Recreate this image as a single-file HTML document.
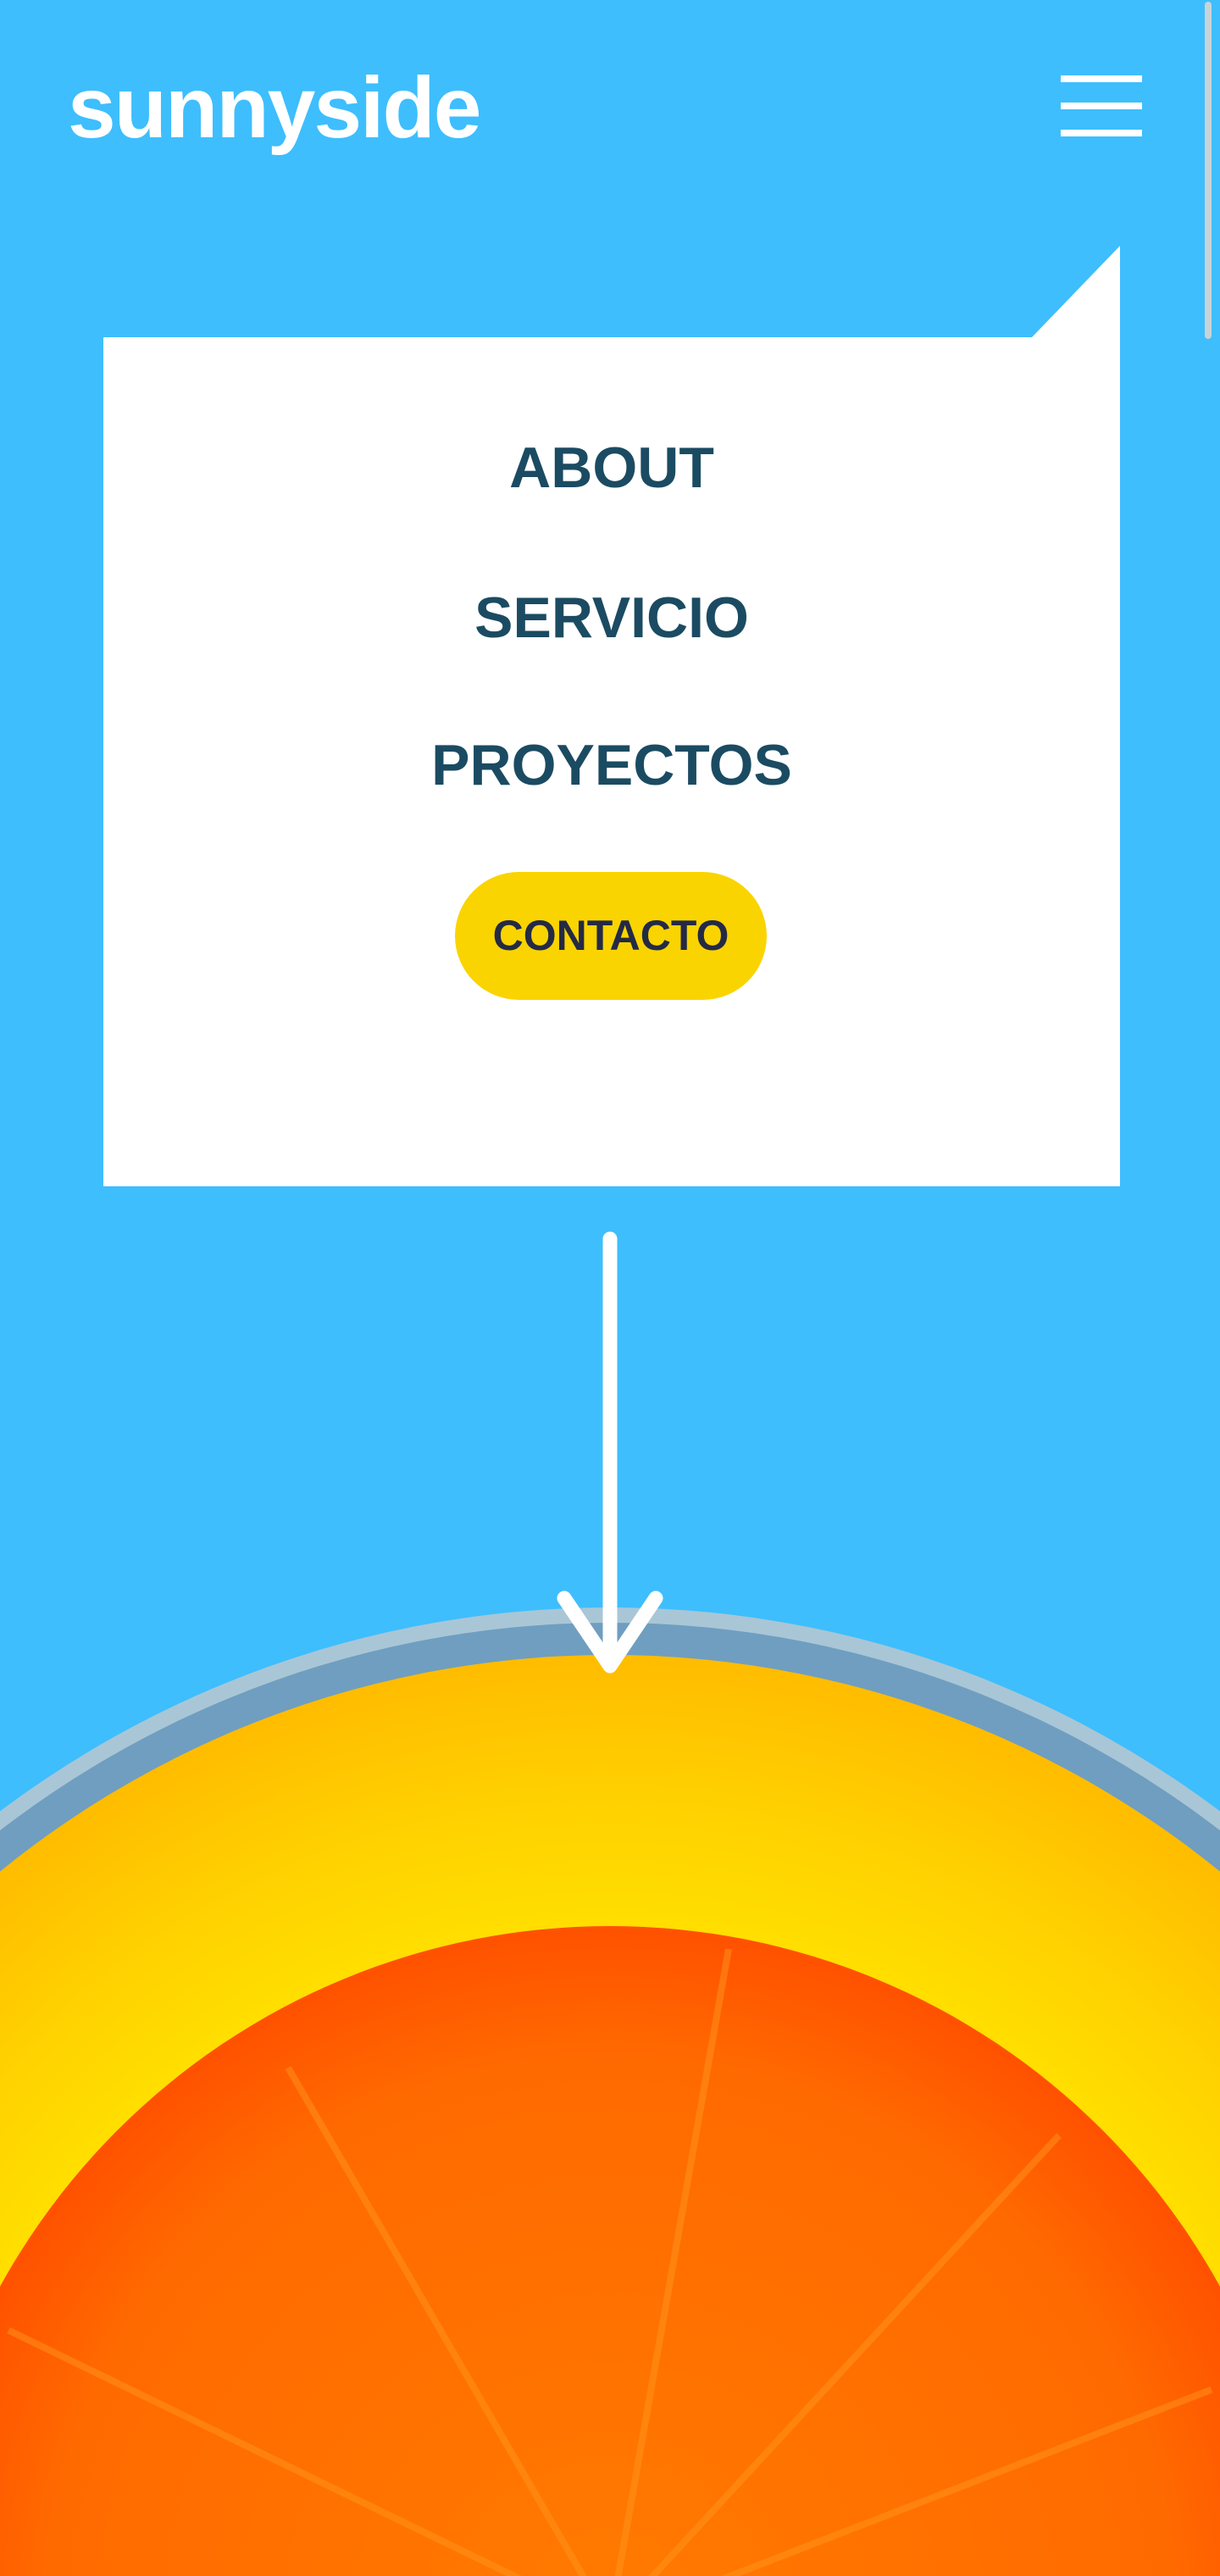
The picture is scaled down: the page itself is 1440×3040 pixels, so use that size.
<!DOCTYPE html>
<html><head><meta charset="utf-8"><style>
html,body{margin:0;padding:0;width:1440px;height:3040px;overflow:hidden}
body{background:#3ebefd;position:relative;font-family:"Liberation Sans",sans-serif}
.logo{position:absolute;left:80px;top:62px;font-size:102px;font-weight:bold;color:#fff;letter-spacing:-2px;line-height:130px}
.ham{position:absolute;left:1252px;width:96px;height:8px;background:#fff}
.scroll{position:absolute;left:1422px;top:2px;width:8px;height:398px;background:#c8d3d8;border-radius:4px}
.menu{position:absolute;left:122px;top:398px;width:1200px;height:1002px;background:#fff}
.tri{position:absolute;left:1218px;top:290px;width:0;height:0;border-left:104px solid transparent;border-bottom:108px solid #fff}
.item{position:absolute;left:0;width:1200px;text-align:center;font-weight:bold;color:#1b4b62;font-size:68px;line-height:80px}
.btn{position:absolute;left:415px;top:631px;width:368px;height:151px;border-radius:76px;background:#f9d400;color:#242a45;font-weight:bold;font-size:50px;line-height:151px;text-align:center}
svg{position:absolute;left:0;top:0}
</style></head><body>
<svg width="1440" height="3040" viewBox="0 0 1440 3040">
<defs>
<radialGradient id="yel" cx="720" cy="3095" r="1150" gradientUnits="userSpaceOnUse">
<stop offset="0.7" stop-color="#ffe000"/><stop offset="0.85" stop-color="#ffd000"/><stop offset="1" stop-color="#ffbb00"/></radialGradient>
<radialGradient id="org" cx="720" cy="3095" r="830" gradientUnits="userSpaceOnUse">
<stop offset="0" stop-color="#ff7a00"/><stop offset="0.8" stop-color="#ff6a00"/><stop offset="1" stop-color="#ff5000"/></radialGradient>
</defs>
<circle cx="720" cy="3095" r="1198" fill="#a9c6d6"/>
<circle cx="720" cy="3095" r="1180" fill="#6f9ec0"/>
<circle cx="720" cy="3095" r="1142" fill="url(#yel)"/>
<circle cx="720" cy="3095" r="822" fill="url(#org)"/>
<g stroke="#ff9a20" stroke-width="8" opacity="0.45">
<line x1="720" y1="3095" x2="860" y2="2300"/>
<line x1="720" y1="3095" x2="340" y2="2440"/>
<line x1="720" y1="3095" x2="1250" y2="2520"/>
<line x1="720" y1="3095" x2="10" y2="2750"/>
<line x1="720" y1="3095" x2="1430" y2="2820"/>
</g>
<line x1="720" y1="1462" x2="720" y2="1960" stroke="#fff" stroke-width="17" stroke-linecap="round"/>
<polyline points="666,1886 720,1966 774,1886" fill="none" stroke="#fff" stroke-width="17" stroke-linecap="round" stroke-linejoin="round"/>
</svg>
<div class="logo">sunnyside</div>
<div class="ham" style="top:89px"></div>
<div class="ham" style="top:121px"></div>
<div class="ham" style="top:153px"></div>
<div class="scroll"></div>
<div class="tri"></div>
<div class="menu">
<div class="item" style="top:114px">ABOUT</div>
<div class="item" style="top:291px">SERVICIO</div>
<div class="item" style="top:465px">PROYECTOS</div>
<div class="btn">CONTACTO</div>
</div>
</body></html>
